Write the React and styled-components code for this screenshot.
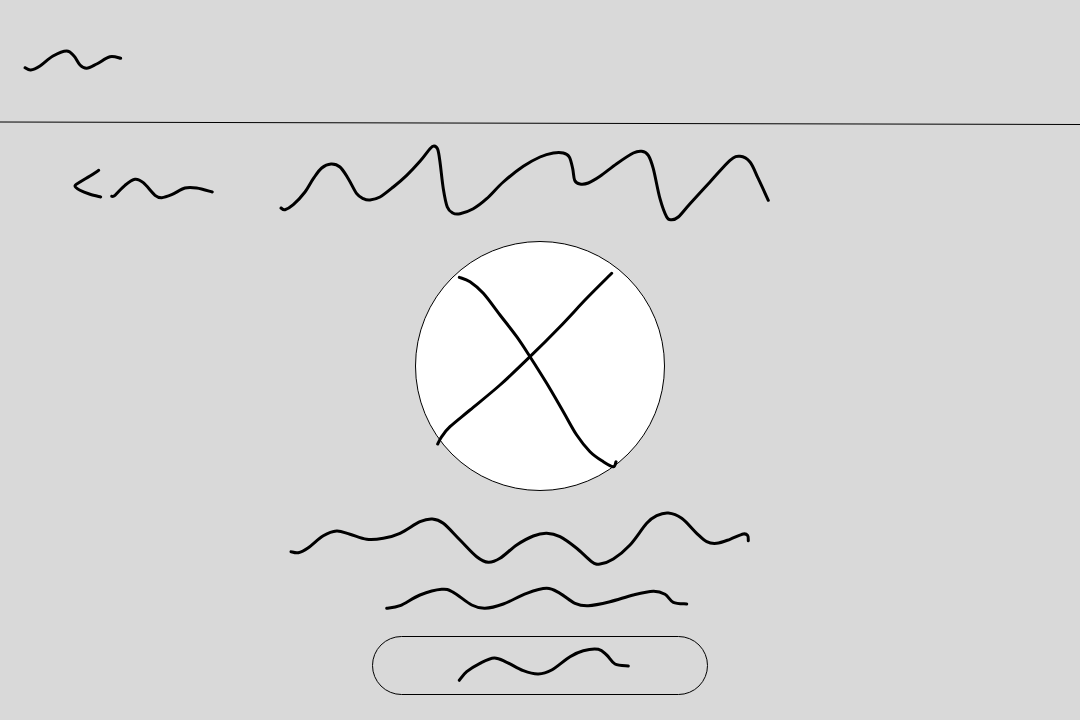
import React from "react";
import styled, { createGlobalStyle } from "styled-components";

const GlobalStyle = createGlobalStyle`
  html, body {
    margin: 0;
    background: #d9d9d9;
  }
`;

const Page = styled.div`
  width: 1080px;
  min-height: 720px;
  background: #d9d9d9;
`;

const Header = styled.header`
  height: 122px;
  padding-left: 24px;
  box-sizing: border-box;
  display: flex;
  align-items: center;
`;

const Divider = styled.svg`
  display: block;
  width: 100%;
  height: 3px;
  overflow: visible;
`;

const TitleRow = styled.div`
  height: 116px;
  padding-left: 74px;
  box-sizing: border-box;
  display: flex;
  align-items: center;
`;

const BackLink = styled.div`
  display: flex;
  align-items: center;
  gap: 10px;
  margin-right: 67px;
`;

const Content = styled.main`
  display: flex;
  flex-direction: column;
  align-items: center;
  gap: 16px;
`;

const Avatar = styled.div`
  width: 250px;
  height: 250px;
  box-sizing: border-box;
  border: 1px solid #000;
  border-radius: 50%;
  background: #fff;
`;

const ActionButton = styled.button`
  width: 336px;
  height: 59px;
  padding: 0;
  box-sizing: border-box;
  border: 1px solid #000;
  border-radius: 30px;
  background: transparent;
  display: flex;
  align-items: center;
  justify-content: center;
`;

const Stroke = styled.svg`
  display: block;
  flex: none;
  overflow: visible;

  path {
    fill: none;
    stroke: #000;
    stroke-width: 3;
    stroke-linecap: round;
    stroke-linejoin: round;
  }
`;

// catmull-rom through the sampled points, all in page coordinates
const smooth = (points) => {
  let d = `M${points[0][0]} ${points[0][1]}`;
  for (let i = 0; i < points.length - 1; i++) {
    const p0 = points[i - 1] || points[i];
    const p1 = points[i];
    const p2 = points[i + 1];
    const p3 = points[i + 2] || p2;
    const c1x = p1[0] + (p2[0] - p0[0]) / 6;
    const c1y = p1[1] + (p2[1] - p0[1]) / 6;
    const c2x = p2[0] - (p3[0] - p1[0]) / 6;
    const c2y = p2[1] - (p3[1] - p1[1]) / 6;
    d += ` C${c1x} ${c1y} ${c2x} ${c2y} ${p2[0]} ${p2[1]}`;
  }
  return d;
};

const Scribble = ({ box, lines }) => (
  <Stroke width={box[2]} height={box[3]} viewBox={box.join(" ")}>
    {lines.map((points, k) => (
      <path key={k} d={smooth(points)} />
    ))}
  </Stroke>
);

const logo = [
  [25, 67.7], [30.7, 70], [40, 66], [53, 56], [66.7, 51], [74, 56], [80, 65],
  [86.7, 68.3], [96.7, 64], [110, 56.7], [120.7, 58.3],
];

const backArrow = [
  [98.7, 168.3], [90, 174], [80, 180], [75, 184], [80, 188.3], [90, 192.3], [100.7, 195],
];

const backLabel = [
  [111.7, 194.3], [115, 193.3], [125, 183.3], [135, 177.3], [143.3, 180.7], [155, 193.3],
  [161.7, 195.7], [171.7, 192.7], [185, 186], [196.7, 186], [212.3, 190],
];

const heading = [
  [281, 206], [285, 207.7], [293.3, 202.7], [305, 190], [313.3, 176.7], [321.7, 166],
  [331, 162], [340, 165], [348.3, 176.7], [356.7, 191.7], [363.3, 196.7], [370, 198],
  [380, 195], [393.3, 185], [406.7, 173.3], [420, 159.3], [430, 146.7], [434, 144],
  [437.7, 147.3], [440, 160], [443.3, 186.7], [447.3, 205], [452.7, 211], [460, 211.7],
  [473.3, 206.7], [486.7, 196.7], [503.3, 180], [523.3, 164.3], [540, 155], [553.3, 151],
  [563.3, 151], [569.3, 155], [572.7, 166.7], [574.7, 178.3], [580, 182], [588.3, 181],
  [600, 174.3], [616.7, 161.7], [633.3, 151], [641.7, 149.3], [648.3, 153.3], [653.3, 166.7],
  [660, 196.7], [666.7, 215], [671.7, 217.7], [678.3, 215], [690, 201.7], [710, 180],
  [730, 158.3], [740, 154.3], [750, 160], [758.3, 176.7], [768.3, 198.3],
];

const crossDown = [
  [459.3, 277.3], [470, 281.7], [483.3, 293.3], [500, 315], [516.7, 336.7], [530, 356.7],
  [546.7, 383.3], [563.3, 411.7], [576.7, 435], [590, 451.7], [603.3, 461.7], [613.3, 466.7],
  [616, 461.7],
];

const crossUp = [
  [611.7, 273.3], [586.7, 298.3], [560, 326.7], [530, 356.7], [500, 385], [470, 410],
  [450, 426.7], [441.7, 436.7], [437.7, 444],
];

const nameLine = [
  [291, 551.7], [298.3, 552.7], [308.3, 547.7], [323.3, 535.7], [336.7, 531], [350, 534.3],
  [366.7, 539.3], [383.3, 538.3], [400, 533.3], [420, 521.7], [432.3, 519], [443.3, 523.3],
  [460, 540], [476.7, 556.7], [488.3, 562.3], [500, 558.3], [516.7, 545], [533.3, 536],
  [546.7, 533.3], [560, 536.7], [576.7, 548.3], [591.7, 561.7], [600, 564], [613.3, 559],
  [630, 545], [646.7, 523.3], [656.7, 515.7], [668.3, 513], [681.7, 518.3], [696.7, 533.3],
  [706.7, 541.7], [716.7, 543.3], [730, 539.3], [743.3, 534], [747.7, 535.7], [748.3, 540.7],
];

const detailLine = [
  [386.7, 608.3], [400, 605.7], [420, 595], [441.7, 589.3], [453.3, 592.3], [471.7, 605],
  [485, 608.3], [503.3, 604], [526.7, 593.3], [546.7, 588.3], [560, 593.3], [575, 603.3],
  [588.3, 605.7], [610, 601.7], [633.3, 595], [653.3, 591.3], [665, 594.3], [673.3, 602.3],
  [686.7, 604],
];

const buttonLabel = [
  [459.3, 680.3], [466.7, 671.7], [480, 663.3], [494.3, 658], [506.7, 662.3], [523.3, 670.7],
  [538.3, 674], [551.7, 670], [570, 656.7], [583.3, 650.7], [598.3, 649.3], [606.7, 655],
  [615, 664], [628.3, 666],
];

const App = () => (
  <Page>
    <GlobalStyle />
    <Header>
      <Scribble box={[24, 46, 100, 30]} lines={[logo]} />
    </Header>
    <Divider viewBox="0 122 1080 3" preserveAspectRatio="none">
      <line x1="0" y1="122" x2="1080" y2="124.5" stroke="#000" strokeWidth="1" />
    </Divider>
    <TitleRow>
      <BackLink>
        <Scribble box={[74, 167, 28, 28]} lines={[backArrow]} />
        <Scribble box={[112, 167, 102, 28]} lines={[backLabel]} />
      </BackLink>
      <Scribble box={[281, 143, 489, 76]} lines={[heading]} />
    </TitleRow>
    <Content>
      <Avatar>
        <Scribble box={[416, 242, 248, 248]} lines={[crossDown, crossUp]} />
      </Avatar>
      <Scribble box={[285, 507, 510, 62]} lines={[nameLine]} />
      <Scribble box={[383, 585, 314, 35]} lines={[detailLine]} />
      <ActionButton>
        <Scribble box={[452, 645, 176, 41]} lines={[buttonLabel]} />
      </ActionButton>
    </Content>
  </Page>
);

export default App;
